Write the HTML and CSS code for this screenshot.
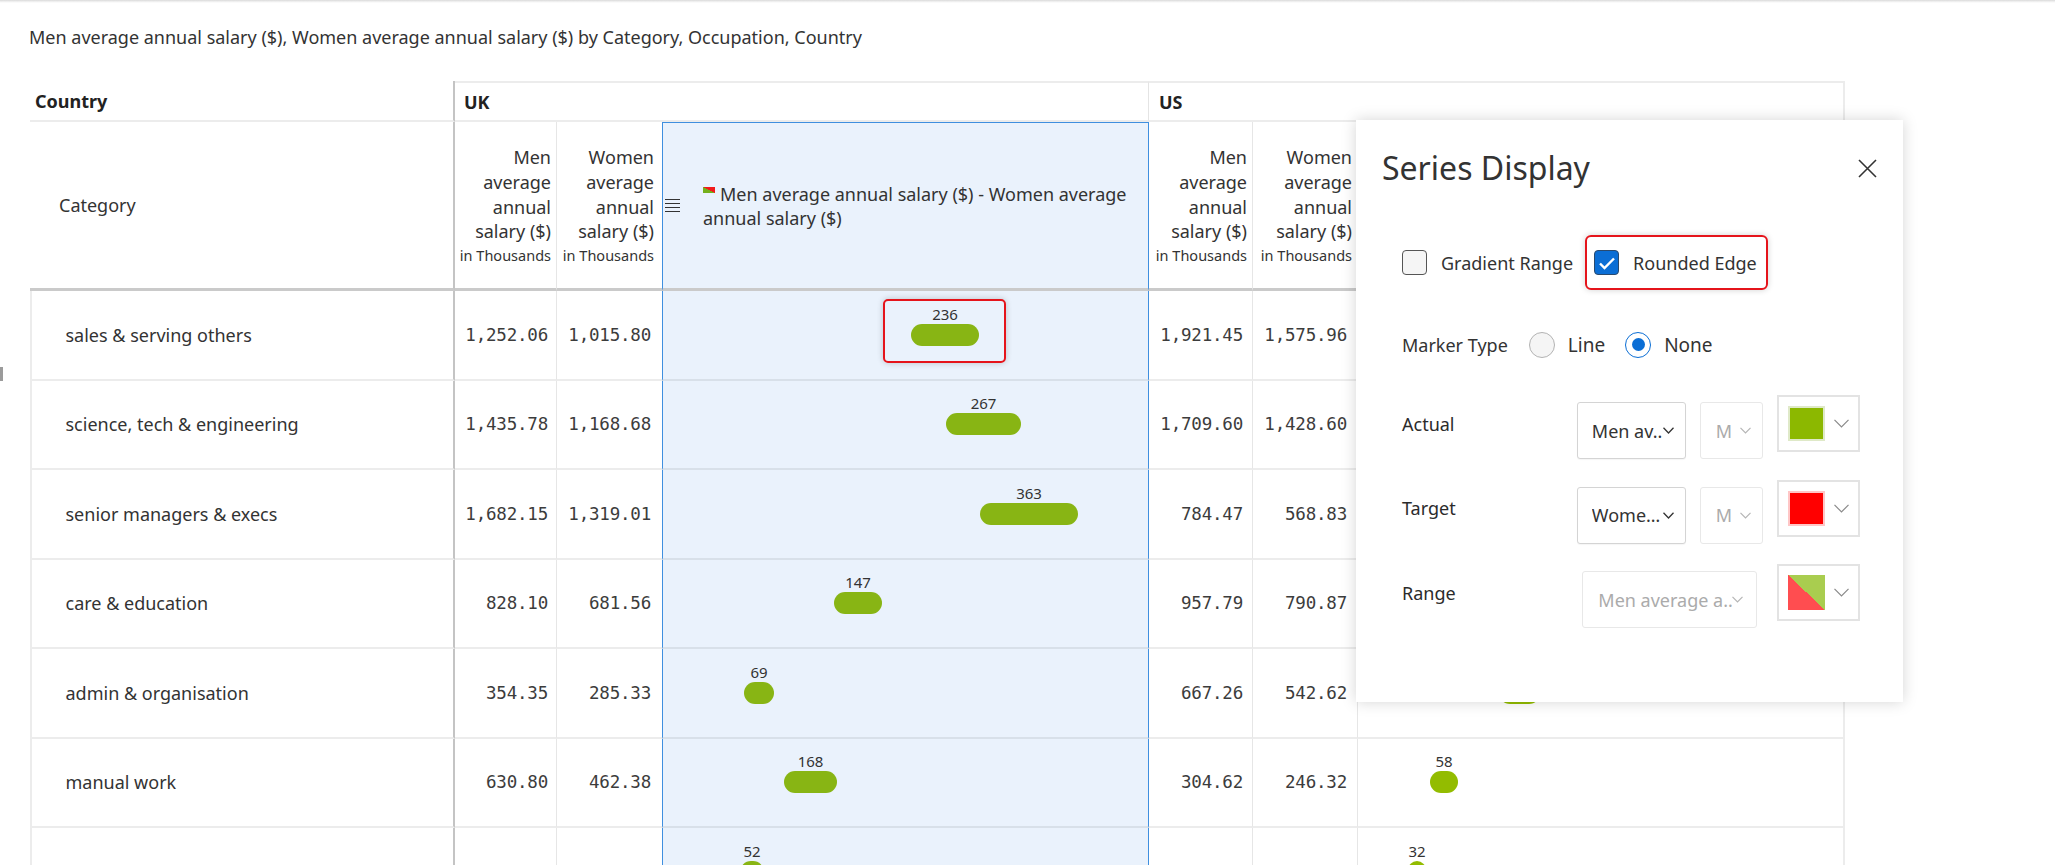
FILE: index.html
```html
<!DOCTYPE html>
<html>
<head>
<meta charset="utf-8">
<title>Series Display</title>
<link rel="stylesheet" href="styles.css">
</head>
<body>
<div class="topline"></div>
<div class="edge-mark"></div>
<h1 class="title">Men average annual salary ($), Women average annual salary ($) by Category, Occupation, Country</h1>

<div class="grid">
  <!-- header row 1 -->
  <div class="cell h1 country">Country</div>
  <div class="cell h1 uk">UK</div>
  <div class="cell h1 us">US</div>

  <!-- header row 2 -->
  <div class="cell h2 cat">Category</div>
  <div class="cell h2 colh bl"><span>Men</span><span>average</span><span>annual</span><span>salary ($)</span><small>in Thousands</small></div>
  <div class="cell h2 colh pr8"><span>Women</span><span>average</span><span>annual</span><span>salary ($)</span><small>in Thousands</small></div>
  <div class="cell h2 chart chead">
    <svg class="menu" width="15" height="13" viewBox="0 0 15 13"><path d="M0 .5H15M0 4.5H15M0 8.5H15M0 12.5H15" stroke="#333" stroke-width="1" fill="none"/></svg>
    <div class="ctitle"><span class="legend"></span>Men average annual salary ($) - Women average<br>annual salary ($)</div>
  </div>
  <div class="cell h2 colh bl"><span>Men</span><span>average</span><span>annual</span><span>salary ($)</span><small>in Thousands</small></div>
  <div class="cell h2 colh bl"><span>Women</span><span>average</span><span>annual</span><span>salary ($)</span><small>in Thousands</small></div>
  <div class="cell h2 uschart"></div>

  <!-- row 1 -->
  <div class="cell r cat">sales &amp; serving others</div>
  <div class="cell r num bl p8">1,252.06</div>
  <div class="cell r num p11">1,015.80</div>
  <div class="cell r chart">
    <div class="bar uk" style="left:248px;width:68px"><span class="blabel">236</span></div>
    <div class="hilite"></div>
  </div>
  <div class="cell r num bl p9">1,921.45</div>
  <div class="cell r num bl p10">1,575.96</div>
  <div class="cell r uschart"><div class="bar us" style="left:384px;width:95px"><span class="blabel">345</span></div></div>

  <!-- row 2 -->
  <div class="cell r cat">science, tech &amp; engineering</div>
  <div class="cell r num bl p8">1,435.78</div>
  <div class="cell r num p11">1,168.68</div>
  <div class="cell r chart"><div class="bar uk" style="left:283px;width:75px"><span class="blabel">267</span></div></div>
  <div class="cell r num bl p9">1,709.60</div>
  <div class="cell r num bl p10">1,428.60</div>
  <div class="cell r uschart"><div class="bar us" style="left:349px;width:80px"><span class="blabel">281</span></div></div>

  <!-- row 3 -->
  <div class="cell r cat">senior managers &amp; execs</div>
  <div class="cell r num bl p8">1,682.15</div>
  <div class="cell r num p11">1,319.01</div>
  <div class="cell r chart"><div class="bar uk" style="left:317px;width:98px"><span class="blabel">363</span></div></div>
  <div class="cell r num bl p9">784.47</div>
  <div class="cell r num bl p10">568.83</div>
  <div class="cell r uschart"><div class="bar us" style="left:148px;width:65px"><span class="blabel">216</span></div></div>

  <!-- row 4 -->
  <div class="cell r cat">care &amp; education</div>
  <div class="cell r num bl p8">828.10</div>
  <div class="cell r num p11">681.56</div>
  <div class="cell r chart"><div class="bar uk" style="left:171px;width:48px"><span class="blabel">147</span></div></div>
  <div class="cell r num bl p9">957.79</div>
  <div class="cell r num bl p10">790.87</div>
  <div class="cell r uschart"><div class="bar us" style="left:200px;width:53px"><span class="blabel">167</span></div></div>

  <!-- row 5 -->
  <div class="cell r cat">admin &amp; organisation</div>
  <div class="cell r num bl p8">354.35</div>
  <div class="cell r num p11">285.33</div>
  <div class="cell r chart"><div class="bar uk" style="left:81px;width:30px"><span class="blabel">69</span></div></div>
  <div class="cell r num bl p9">667.26</div>
  <div class="cell r num bl p10">542.62</div>
  <div class="cell r uschart"><div class="bar us" style="left:141px;width:41px"><span class="blabel">125</span></div></div>

  <!-- row 6 -->
  <div class="cell r cat">manual work</div>
  <div class="cell r num bl p8">630.80</div>
  <div class="cell r num p11">462.38</div>
  <div class="cell r chart"><div class="bar uk" style="left:121px;width:53px"><span class="blabel">168</span></div></div>
  <div class="cell r num bl p9">304.62</div>
  <div class="cell r num bl p10">246.32</div>
  <div class="cell r uschart"><div class="bar us" style="left:72px;width:28px"><span class="blabel">58</span></div></div>

  <!-- row 7 -->
  <div class="cell r cat">people &amp; media</div>
  <div class="cell r num bl p8">315.41</div>
  <div class="cell r num p11">263.70</div>
  <div class="cell r chart"><div class="bar uk" style="left:77px;width:24px"><span class="blabel">52</span></div></div>
  <div class="cell r num bl p9">171.02</div>
  <div class="cell r num bl p10">138.64</div>
  <div class="cell r uschart"><div class="bar us" style="left:50px;width:18px"><span class="blabel">32</span></div></div>
</div>

<div class="panel">
  <div class="panel-head">
    <div class="panel-title">Series Display</div>
    <svg class="close" width="19" height="19" viewBox="0 0 19 19"><path d="M1 1L18 18M18 1L1 18" stroke="#333" stroke-width="1.6" fill="none"/></svg>
  </div>

  <div class="opts">
    <div class="check"><span class="box"></span><span>Gradient Range</span></div>
    <div class="check hl"><span class="box on"><svg width="18" height="14" viewBox="0 0 18 14"><path d="M2 7.5L6.5 12L16 2.5" stroke="#fff" stroke-width="2.4" fill="none"/></svg></span><span>Rounded Edge</span></div>
  </div>

  <div class="marker">
    <span class="mlabel">Marker Type</span>
    <span class="radio"></span><span class="rtext">Line</span>
    <span class="radio on"><span class="dot"></span></span><span class="rtext">None</span>
  </div>

  <div class="srow first">
    <span class="slabel">Actual</span>
    <div class="ctrl">
      <div class="sel w1"><span class="stext">Men av…</span><svg class="chev" width="11" height="7" viewBox="0 0 11 7"><path d="M.5 .8L5.5 6L10.5 .8" stroke="#333" stroke-width="1.3" fill="none"/></svg></div>
      <div class="sel w2 dis"><span class="stext">M</span><svg class="chev" width="11" height="7" viewBox="0 0 11 7"><path d="M.5 .8L5.5 6L10.5 .8" stroke="#b5b5b5" stroke-width="1.2" fill="none"/></svg></div>
    </div>
    <div class="pick"><span class="sw g"></span><svg width="15" height="9" viewBox="0 0 15 9"><path d="M.5 .8L7.5 8L14.5 .8" stroke="#8a8a8a" stroke-width="1.2" fill="none"/></svg></div>
  </div>

  <div class="srow">
    <span class="slabel">Target</span>
    <div class="ctrl">
      <div class="sel w1"><span class="stext">Wome…</span><svg class="chev" width="11" height="7" viewBox="0 0 11 7"><path d="M.5 .8L5.5 6L10.5 .8" stroke="#333" stroke-width="1.3" fill="none"/></svg></div>
      <div class="sel w2 dis"><span class="stext">M</span><svg class="chev" width="11" height="7" viewBox="0 0 11 7"><path d="M.5 .8L5.5 6L10.5 .8" stroke="#b5b5b5" stroke-width="1.2" fill="none"/></svg></div>
    </div>
    <div class="pick"><span class="sw r"></span><svg width="15" height="9" viewBox="0 0 15 9"><path d="M.5 .8L7.5 8L14.5 .8" stroke="#8a8a8a" stroke-width="1.2" fill="none"/></svg></div>
  </div>

  <div class="srow">
    <span class="slabel">Range</span>
    <div class="ctrl">
      <div class="sel w3 dis"><span class="stext">Men average a…</span><svg class="chev" width="11" height="7" viewBox="0 0 11 7"><path d="M.5 .8L5.5 6L10.5 .8" stroke="#b5b5b5" stroke-width="1.2" fill="none"/></svg></div>
    </div>
    <div class="pick"><span class="sw m"></span><svg width="15" height="9" viewBox="0 0 15 9"><path d="M.5 .8L7.5 8L14.5 .8" stroke="#8a8a8a" stroke-width="1.2" fill="none"/></svg></div>
  </div>
</div>
</body>
</html>
```

FILE: styles.css
```css
* { box-sizing: border-box; margin: 0; padding: 0; }
html, body { width: 2055px; height: 865px; overflow: hidden; background: #fff; }
body { font-family: "Noto Sans", "Open Sans", sans-serif; color: #333; position: relative; }

.topline { height: 3px; background: linear-gradient(#d9d9d9, #f3f3f3 60%, #fff); }
.edge-mark { position: absolute; left: 0; top: 367px; width: 3px; height: 14px; background: #9b9b9b; }

.title { font-size: 18px; font-weight: 400; line-height: 24px; margin: 22px 0 0 29px; color: #333; white-space: nowrap; }

.grid {
  display: grid;
  margin: 32px 0 0 30px;
  width: 1815px;
  grid-template-columns: 425px 102px 105px 487px 104px 105px 487px;
  grid-template-rows: 41px 169px repeat(7, 89.5px);
}
.cell { display: flex; align-items: center; min-width: 0; }

/* header row 1 */
.h1 { border-bottom: 2px solid #ececec; font-weight: 700; font-size: 18px; color: #222; }
.h1.country { border-right: 2px solid #c4c4c4; padding-left: 5px; }
.h1.uk { grid-column: 2 / 5; border-top: 2px solid #ececec; border-right: 1px solid #e4e4e4; padding-left: 9px; }
.h1.us { grid-column: 5 / 8; border-top: 2px solid #ececec; border-right: 2px solid #ececec; padding-left: 10px; }

/* header row 2 */
.h2 { border-bottom: 3px solid #cacaca; font-size: 18px; }
.h2.cat { border-right: 2px solid #c4c4c4; padding-left: 29px; }
.colh { flex-direction: column; justify-content: center; align-items: flex-end; text-align: right; padding-right: 5px; line-height: 24.67px; color: #333; }
.colh.pr8 { padding-right: 8px; }
.colh span, .colh small { display: block; white-space: nowrap; }
.colh small { font-size: 14.5px; line-height: 20px; margin-top: 1px; }
.bl { border-right: 1px solid #e6e6e6; }

.chart { background: #eaf2fc; border-left: 1px solid #3f8fdf; border-right: 1px solid #3f8fdf; position: relative; }
.chead { border-top: 1px solid #3f8fdf; padding-left: 2px; }
.menu { flex: none; display: block; }
.ctitle { margin-left: 23px; font-size: 18px; line-height: 24px; color: #333; white-space: nowrap; }
.legend { display: inline-block; width: 12px; height: 6px; margin-right: 5px; vertical-align: 8px; background: linear-gradient(to bottom left, #f21b1b 50%, #74b01c 50%); }
.uschart { border-right: 2px solid #ececec; position: relative; }

/* body rows */
.r { border-bottom: 2px solid #ececec; }
.r.cat { border-left: 2px solid #ececec; border-right: 2px solid #c4c4c4; padding-left: 33.5px; font-size: 18px; color: #333; white-space: nowrap; }
.r.num { justify-content: flex-end; font-family: "DejaVu Sans Mono", "Liberation Mono", monospace; font-size: 17.5px; letter-spacing: -0.2px; color: #3c3c3c; }
.p8 { padding-right: 8px; }
.p9 { padding-right: 9px; }
.p10 { padding-right: 10px; }
.p11 { padding-right: 11px; }
.r.chart { border-bottom-color: #d8e0e9; }

.bar { position: absolute; top: calc(50% - 11px); height: 22px; border-radius: 11px; }
.bar.uk { background: #88b514; }
.bar.us { background: #93bc00; }
.blabel { position: absolute; left: 50%; bottom: 100%; transform: translateX(-50%); margin-bottom: 2px; font-size: 15px; line-height: 16px; color: #333; white-space: nowrap; }

.hilite { position: absolute; left: 220px; top: 8px; width: 123px; height: 64px; border: 2px solid #e5141b; border-radius: 5px; box-shadow: 0 0 6px rgba(0, 0, 0, 0.2); }

/* panel */
.panel { position: absolute; left: 1356px; top: 120px; width: 547px; height: 582px; background: #fff; box-shadow: 0 0 14px rgba(0, 0, 0, 0.17); padding-top: 28px; }
.panel-head { display: flex; align-items: center; justify-content: space-between; height: 40px; padding: 0 26px 0 26px; }
.panel-title { font-size: 32px; line-height: 40px; color: #333; }
.close { display: block; }

.opts { display: flex; align-items: center; height: 55px; margin-top: 47px; padding-left: 46px; font-size: 18px; color: #333; }
.check { display: flex; align-items: center; white-space: nowrap; }
.box { width: 25px; height: 25px; flex: none; border: 1.5px solid #555; border-radius: 4px; background: #f5f5f5; margin-right: 14px; display: flex; align-items: center; justify-content: center; }
.box.on { background: #0b6ed5; border-color: #2a4a6e; }
.hl { height: 55px; border: 2px solid #e5141b; border-radius: 6px; padding: 0 9px 0 7px; margin-left: 12px; box-shadow: 0 0 6px rgba(0, 0, 0, 0.18); }

.marker { display: flex; align-items: center; height: 30px; margin-top: 39.5px; padding-left: 46px; color: #333; }
.mlabel { font-size: 18px; margin-right: 21px; white-space: nowrap; }
.radio { width: 26px; height: 26px; flex: none; border: 1.5px solid #b3b3b3; border-radius: 50%; background: #f5f5f5; display: flex; align-items: center; justify-content: center; }
.radio.on { border-color: #0b6ed5; background: #fff; margin-left: 20px; }
.dot { width: 13px; height: 13px; border-radius: 50%; background: #0b6ed5; }
.rtext { font-size: 19px; margin-left: 13px; }

.srow { display: flex; align-items: center; height: 57px; margin-top: 27.5px; padding-left: 46px; }
.srow.first { margin-top: 35.5px; }
.slabel { width: 174.7px; flex: none; font-size: 18px; color: #2b2b2b; }
.ctrl { width: 186.3px; flex: none; display: flex; justify-content: center; gap: 14px; margin-top: 14px; }
.sel { height: 57px; border: 1px solid #d4d4d4; border-radius: 3px; display: flex; align-items: center; padding: 0 11px 0 14px; font-size: 18px; color: #333; background: #fff; box-shadow: 0 1px 1px rgba(0, 0, 0, 0.04); }
.sel.dis { color: #ababab; border-color: #e8e8e8; box-shadow: none; padding-left: 15px; }
.stext { flex: 1; white-space: nowrap; overflow: hidden; }
.chev { flex: none; display: block; }
.w1 { width: 109px; }
.w2 { width: 63px; }
.w3 { width: 175px; padding-right: 13px; }
.pick { width: 83px; height: 57px; flex: none; border: 2px solid #e3e3e3; display: flex; align-items: center; justify-content: space-between; padding: 0 9px 0 8.7px; margin-left: 14px; }
.sw { width: 37px; height: 35px; display: block; }
.sw.g { background: #8cb800; border: 2px solid #dfe9c8; }
.sw.r { background: #ff0000; border: 2px solid #ffc6c6; }
.sw.m { background: linear-gradient(to bottom left, #a9cd4f 50%, #ff4d50 50%); }
```
